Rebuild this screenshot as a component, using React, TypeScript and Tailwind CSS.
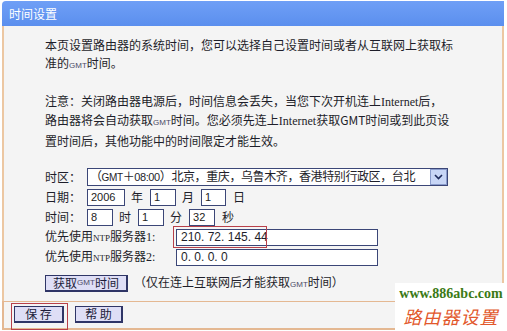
const cjk = "font-['Noto_Sans_CJK_SC',sans-serif]";

function Gmt() {
  return (
    <span className="font-['Liberation_Sans',sans-serif] text-[8px] text-[#4a4a66]">
      GMT
    </span>
  );
}

function Net() {
  return (
    <span className="font-['Liberation_Serif',serif] text-[12px]">Internet</span>
  );
}

function Box({ w, children }: { w: string; children?: React.ReactNode }) {
  return (
    <div
      className={`${w} flex h-[17px] items-center border border-[#3b4677] bg-white pl-[3px] font-['Liberation_Sans',sans-serif] text-[11px] text-[#222]`}
    >
      {children}
    </div>
  );
}

function Btn({ w, children }: { w: string; children: React.ReactNode }) {
  return (
    <div
      className={`${w} flex h-[17px] items-center justify-center border border-[#2f3566] border-r-[2px] border-b-[2px] bg-[#dedef6] text-[12px] text-[#1c1c3a]`}
    >
      {children}
    </div>
  );
}

export default function App() {
  return (
    <div
      className={`relative h-[331px] w-[507px] overflow-hidden bg-white pl-[2px] pt-[1px] ${cjk} text-[#1e1e2a]`}
    >
      <div className="w-[502px]">
        <div className="h-[25px] rounded-tl-[4px] bg-gradient-to-b from-[#6f9ff6] to-[#5b8fee] pl-[7px] text-[12px] leading-[25px] text-white">
          时间设置
        </div>

        <div className="h-[275px] border-x-2 border-[#ecc7a2] bg-[#f4f4f4] pl-[41px] pt-[10px] text-[12px] leading-[18px]">
          <p className="whitespace-nowrap">
            本页设置路由器的系统时间，您可以选择自己设置时间或者从互联网上获取标
            <br />
            准的<Gmt />时间。
          </p>
          <p className="mt-[17px] whitespace-nowrap">
            注意：关闭路由器电源后，时间信息会丢失，当您下次开机连上<Net />后，
            <br />
            路由器将会自动获取<Gmt />时间。您必须先连上<Net />获取GMT时间或到此页设
            <br />
            置时间后，其他功能中的时间限定才能生效。
          </p>

          <div className="mt-[17px] flex flex-col">
            <div className="flex h-[20px] items-center">
              <span className="w-[42px]">时区：</span>
              <div className="flex h-[18px] w-[361px] items-center border border-[#3b4677] bg-white">
                <span className="flex-1 whitespace-nowrap pl-[2px] text-[12px] tracking-[-0.4px]">
                  （<span className="font-['Liberation_Sans',sans-serif] text-[10px]">GMT</span>＋
                  <span className="font-['Liberation_Sans',sans-serif] text-[11px]">08:00</span>
                  ）北京，重庆，乌鲁木齐，香港特别行政区，台北
                </span>
                <div className="flex h-[16px] w-[17px] shrink-0 items-center justify-center border border-[#8a9ccc] bg-[#c8d6f6]">
                  <svg width="9" height="6" viewBox="0 0 9 6">
                    <path d="M1 1l3.5 3.5L8 1" fill="none" stroke="#1d2a5a" strokeWidth="1.6" />
                  </svg>
                </div>
              </div>
            </div>

            <div className="flex h-[20px] items-center">
              <span className="w-[42px]">日期：</span>
              <Box w="w-[38px]">2006</Box>
              <span className="ml-[6px] mr-[7px]">年</span>
              <Box w="w-[26px]">1</Box>
              <span className="ml-[6px] mr-[7px]">月</span>
              <Box w="w-[25px]">1</Box>
              <span className="ml-[7px]">日</span>
            </div>

            <div className="flex h-[20px] items-center">
              <span className="w-[42px]">时间：</span>
              <Box w="w-[26px]">8</Box>
              <span className="ml-[6px] mr-[7px]">时</span>
              <Box w="w-[26px]">1</Box>
              <span className="ml-[6px] mr-[7px]">分</span>
              <Box w="w-[26px]">32</Box>
              <span className="ml-[7px]">秒</span>
            </div>

            <div className="flex h-[20px] items-center">
              <span className="w-[131px] whitespace-nowrap">
                优先使用
                <span className="font-['Liberation_Serif',serif] text-[9px]">NTP</span>
                服务器<span className="font-['Liberation_Serif',serif]">1:</span>
              </span>
              <div className="relative">
                <div className="flex h-[17px] w-[202px] items-center border border-[#3b4677] bg-white pl-[4px] font-['Liberation_Sans',sans-serif] text-[12px]">
                  210. 72. 145. 44
                </div>
                <div className="absolute left-[-3px] top-[-3px] h-[22px] w-[94px] border border-[#b8404a]" />
              </div>
            </div>

            <div className="flex h-[20px] items-center">
              <span className="w-[131px] whitespace-nowrap">
                优先使用
                <span className="font-['Liberation_Serif',serif] text-[9px]">NTP</span>
                服务器<span className="font-['Liberation_Serif',serif]">2:</span>
              </span>
              <div className="flex h-[17px] w-[202px] items-center border border-[#3b4677] bg-white pl-[4px] font-['Liberation_Sans',sans-serif] text-[12px]">
                0. 0. 0. 0
              </div>
            </div>

            <div className="mt-[6px] flex items-center">
              <Btn w="w-[83px]">
                获取<Gmt />时间
              </Btn>
              <span className="ml-[6px] whitespace-nowrap">
                （仅在连上互联网后才能获取<Gmt />时间）
              </span>
            </div>
          </div>
        </div>

        <div className="flex h-[29px] gap-[11px] border-x-2 border-b-2 border-t border-[#e4b892] bg-[#f4f4f4] pl-[10px] pt-[4px]">
          <div className="relative">
            <Btn w="w-[50px]">保 存</Btn>
            <div className="absolute left-[-3px] top-[-3px] h-[27px] w-[57px] border border-[#b8404a]" />
          </div>
          <Btn w="w-[48px]">帮 助</Btn>
        </div>
      </div>

      <div className="absolute bottom-0 right-0 flex h-[48px] w-[112px] flex-col items-center bg-white pt-[3px]">
        <span className="font-['Liberation_Serif',serif] text-[14px] font-bold leading-[16px] text-[#3b7a16]">
          www.886abc.com
        </span>
        <span className="mt-[3px] text-[18px] italic leading-[22px] tracking-[1px] text-[#e2582c]">
          路由器设置
        </span>
      </div>
    </div>
  );
}
